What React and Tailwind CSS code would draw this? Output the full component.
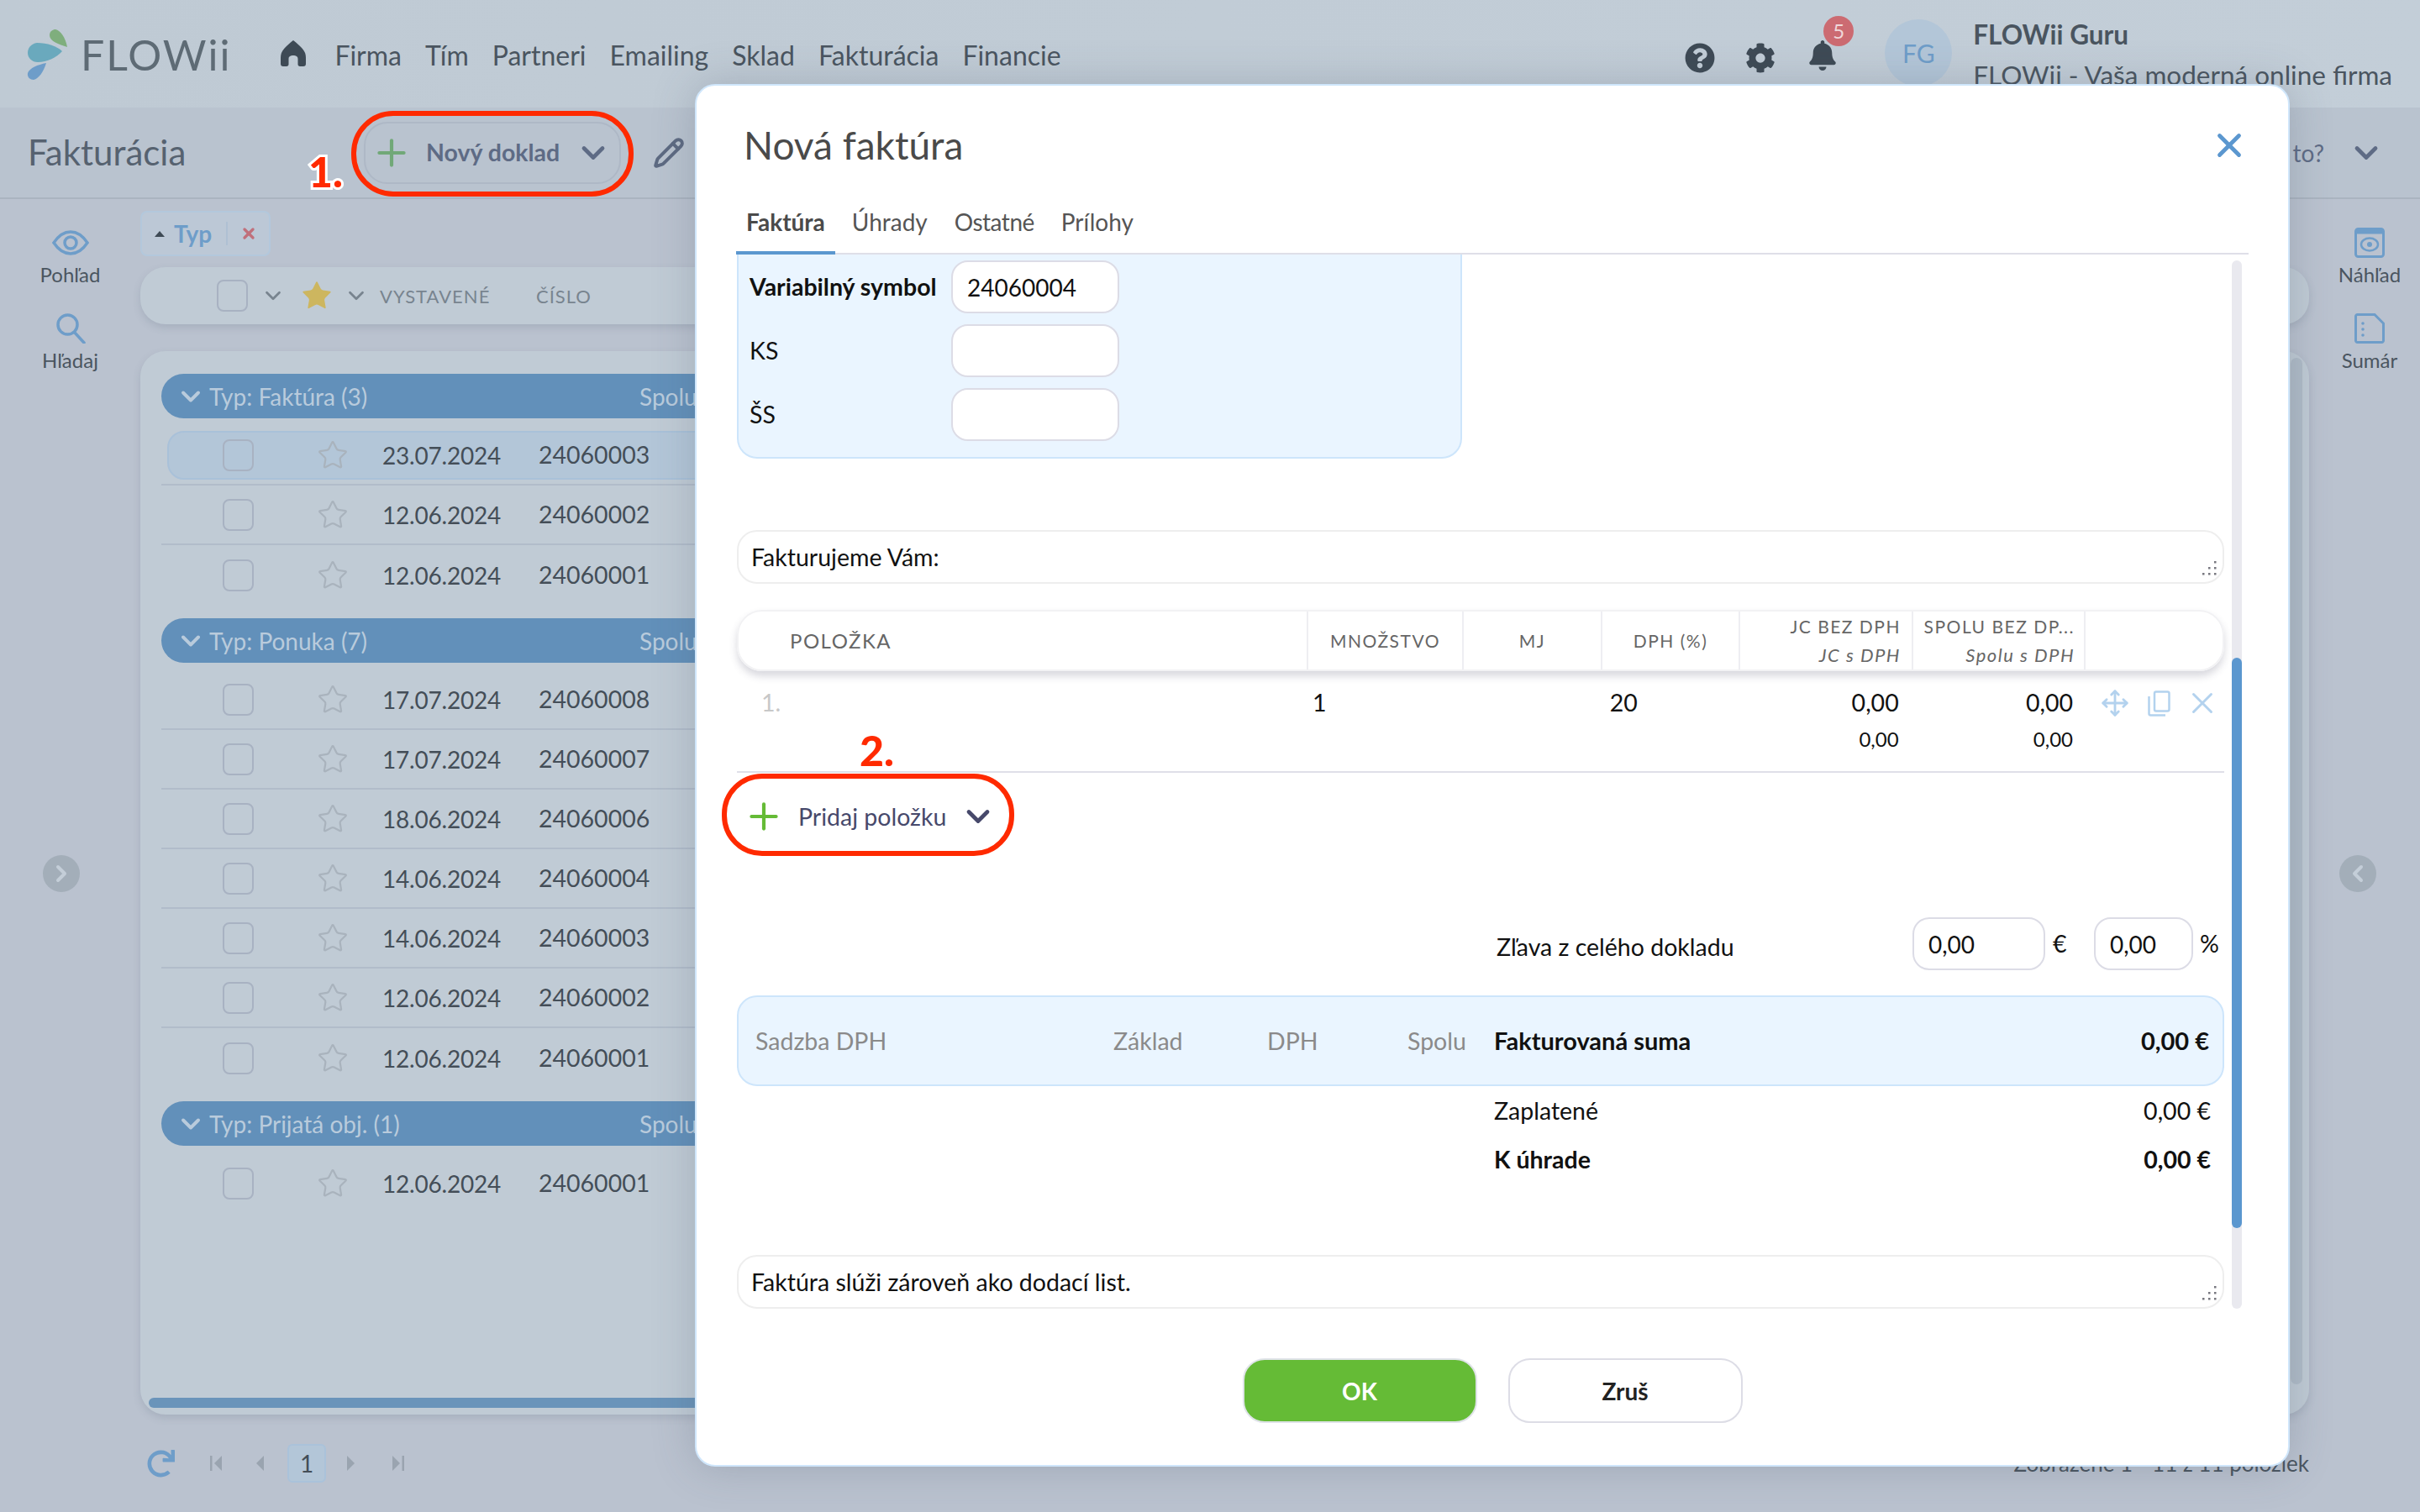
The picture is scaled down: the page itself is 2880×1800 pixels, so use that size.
import { Plus, ChevronDown, ChevronLeft, ChevronRight, Star, Pencil, X, Move } from 'lucide-react';
import { FaQuestionCircle, FaCog, FaBell, FaRedo } from 'react-icons/fa';

const groups = [
  {
    title: 'Typ: Faktúra (3)',
    rows: [
      { date: '23.07.2024', num: '24060003', selected: true },
      { date: '12.06.2024', num: '24060002' },
      { date: '12.06.2024', num: '24060001' },
    ],
  },
  {
    title: 'Typ: Ponuka (7)',
    rows: [
      { date: '17.07.2024', num: '24060008' },
      { date: '17.07.2024', num: '24060007' },
      { date: '18.06.2024', num: '24060006' },
      { date: '14.06.2024', num: '24060004' },
      { date: '14.06.2024', num: '24060003' },
      { date: '12.06.2024', num: '24060002' },
      { date: '12.06.2024', num: '24060001' },
    ],
  },
  {
    title: 'Typ: Prijatá obj. (1)',
    rows: [{ date: '12.06.2024', num: '24060001' }],
  },
];

const nav = ['Firma', 'Tím', 'Partneri', 'Emailing', 'Sklad', 'Fakturácia', 'Financie'];

const Logo = () => (
  <svg width="54" height="68" viewBox="0 0 54 68" className="shrink-0">
    <path d="M50 25C40 22 29 18 29 11C29 6 33 4 36 4C42 5 48 14 50 25Z" fill="#7fae7d" />
    <path d="M44 30C38 24 26 20 14 20C7 21 3 26 3 32C3 38 8 43 15 43C26 43 38 37 44 30Z" fill="#6aa9bd" />
    <path d="M25 44C15 46 5 50 3 56C2 61 6 64 10 64C16 63 22 54 25 44Z" fill="#6e9dc9" />
  </svg>
);

const HomeIcon = () => (
  <svg width="30" height="31" viewBox="0 0 30 31" className="shrink-0">
    <path d="M15 0C19 3 26 9 28 13C30 16 30 19 30 23V28C30 30 29 31 27 31H23C21.500 31 20.500 30 20.500 28.500V22C20.500 19 18 18 15 18C12 18 9.500 19 9.500 22V28.500C9.500 30 8.500 31 7 31H3C1 31 0 30 0 28V23C0 19 0 16 2 13C4 9 11 3 15 0Z" fill="#3e4a55" />
  </svg>
);

const EyeIcon = () => (
  <svg width="44" height="30" viewBox="0 0 44 30" fill="none" stroke="#6e9dc9" strokeWidth="3.500">
    <path d="M2 15C8 6 15 2 22 2C29 2 36 6 42 15C36 24 29 28 22 28C15 28 8 24 2 15Z" />
    <circle cx="22" cy="15" r="7" />
  </svg>
);

const SearchIcon = () => (
  <svg width="36" height="36" viewBox="0 0 36 36" fill="none" stroke="#6e9dc9" strokeWidth="3.500" strokeLinecap="round">
    <circle cx="14.500" cy="13.500" r="11.500" />
    <path d="M22.500 22.500L34 35" />
  </svg>
);

const CopyIcon = () => (
  <svg width="27" height="31" viewBox="0 0 27 31" fill="none" stroke="#b3d2ee" strokeWidth="2.500">
    <rect x="8" y="1.500" width="17.500" height="23" rx="2" />
    <path d="M1.500 7V27.500C1.500 28.600 2.400 29.500 3.500 29.500H21" />
  </svg>
);

const Checkbox = ({ className }) => (
  <div className={`w-[37px] h-[38px] shrink-0 rounded-[8px] border-2 border-[#a8b2c2] ${className || ''}`} />
);

const Grip = () => (
  <svg width="18" height="18" viewBox="0 0 18 18" className="absolute right-[7px] bottom-[7px]" fill="#77777f">
    <rect x="15" y="0" width="2.500" height="2.500" />
    <rect x="15" y="7" width="2.500" height="2.500" />
    <rect x="8" y="7" width="2.500" height="2.500" />
    <rect x="15" y="14" width="2.500" height="2.500" />
    <rect x="8" y="14" width="2.500" height="2.500" />
    <rect x="1" y="14" width="2.500" height="2.500" />
  </svg>
);

const Field = ({ value, className }) => (
  <div className={`h-[63px] flex items-center pl-[17px] bg-white border-2 border-[#dcdce6] rounded-[20px] text-[28px] text-[#111] ${className}`}>
    {value}
  </div>
);

const Row = ({ row, last }) => (
  <div className={`h-[71px] flex items-center ${last ? '' : 'border-b-2 border-[#b1bcca]'}`}>
    <div className={`flex items-center h-[58px] flex-1 ml-[7px] pl-[64px] rounded-l-[20px] border-2 ${row.selected ? 'bg-[#b3c6d8] border-[#a9c1d9]' : 'border-transparent'}`}>
      <Checkbox />
      <Star size={38} strokeWidth={1.400} className="ml-[75px] text-[#a9b3bd] shrink-0" />
      <div className="ml-[40px] w-[186px] text-[28px] text-[#444e58] tracking-[-0.2px]">{row.date}</div>
      <div className="text-[28.500px] text-[#444e58]">{row.num}</div>
    </div>
  </div>
);

const Group = ({ group, first }) => (
  <div className={first ? '' : 'mt-[16px]'}>
    <div className="h-[53px] flex items-center pl-[17px] rounded-l-[27px] bg-[#6290ba] text-[#b9cbdc] text-[28px]">
      <ChevronDown size={36} strokeWidth={2.600} className="shrink-0" />
      <span className="ml-[4px] w-[512px]">{group.title}</span>
      <span>Spolu</span>
    </div>
    <div className="mt-[9px]">
      {group.rows.map((row, i) => (
        <Row key={i} row={row} last={i === group.rows.length - 1} />
      ))}
    </div>
  </div>
);

const SideButton = ({ icon, label, className }) => (
  <div className={`flex flex-col items-center text-[24px] text-[#4a5560] ${className || ''}`}>
    <div className="h-[36px] flex items-center justify-center">{icon}</div>
    <div className="mt-[2px]">{label}</div>
  </div>
);

const Triangle = ({ flip, bar }) => (
  <svg width="14" height="18" viewBox="0 0 14 18" fill="#9aa4b0" className={flip ? 'rotate-180' : ''}>
    {bar && <rect x="0" y="0" width="2.500" height="18" />}
    <path d="M14 0V18L5 9Z" />
  </svg>
);

const HeadCell = ({ className, children }) => (
  <div className={`h-full shrink-0 border-r-2 border-[#eeeef2] text-[#666] tracking-[1.500px] ${className}`}>
    {children}
  </div>
);

const Modal = () => (
  <div className="absolute left-[827px] top-[100px] w-[1898px] h-[1646px] flex flex-col bg-white border-2 border-[#cfe6fb] rounded-[24px] shadow-[0_0_50px_rgba(70,85,105,0.25)] text-[#111]">
    <div className="h-[101px] flex items-center justify-between pt-[41px] pl-[56px] pr-[47px]">
      <h1 className="text-[46px] leading-[60px] text-[#4a4a4a]">Nová faktúra</h1>
      <X size={46} strokeWidth={2.500} className="text-[#5b97cf]" />
    </div>

    <div className="mt-[26px] ml-[47px] mr-[47px] h-[74px] flex gap-[8px] border-b-2 border-[#dfdfe8] text-[28px] text-[#555]">
      <div className="px-[12px] h-[74px] pt-[14px] font-bold border-b-4 border-[#5b97cf] text-[#4a4a4a]">Faktúra</div>
      <div className="px-[12px] pt-[14px]">Úhrady</div>
      <div className="px-[12px] pt-[14px] tracking-[-0.500px]">Ostatné</div>
      <div className="px-[12px] pt-[14px]">Prílohy</div>
    </div>

    <div className="flex ml-[48px] h-[1255px] text-[28.500px]">
      <div className="w-[1770px] shrink-0">
        <div className="w-[863px] h-[243px] pt-[7px] pl-[13px] flex flex-col gap-[13px] bg-[#eaf5ff] border-2 border-t-0 border-[#cde5fb] rounded-b-[24px]">
          <div className="flex items-center">
            <div className="w-[240px] font-bold">Variabilný symbol</div>
            <Field value="24060004" className="w-[200px]" />
          </div>
          <div className="flex items-center">
            <div className="w-[240px]">KS</div>
            <Field value="" className="w-[200px]" />
          </div>
          <div className="flex items-center">
            <div className="w-[240px]">ŠS</div>
            <Field value="" className="w-[200px]" />
          </div>
        </div>

        <div className="relative mt-[85px] h-[64px] flex items-center pl-[15px] border-2 border-[#eeeeee] rounded-[24px]">
          Fakturujeme Vám:
          <Grip />
        </div>

        <div className="mt-[31px] h-[73px] flex items-center border-2 border-[#f2f2f4] rounded-[30px] shadow-[0_6px_10px_rgba(60,60,90,0.2)] overflow-hidden text-[21px]">
          <HeadCell className="w-[678px] flex items-center pl-[61px] text-[24px]">POLOŽKA</HeadCell>
          <HeadCell className="w-[185px] flex items-center justify-center">MNOŽSTVO</HeadCell>
          <HeadCell className="w-[165px] flex items-center justify-center">MJ</HeadCell>
          <HeadCell className="w-[164px] flex items-center justify-center">DPH (%)</HeadCell>
          <HeadCell className="w-[206px] flex flex-col items-end justify-center gap-[10px] pr-[13px] leading-[24px]">
            <div>JC BEZ DPH</div>
            <div className="italic text-[22px]">JC s DPH</div>
          </HeadCell>
          <HeadCell className="w-[205px] flex flex-col items-end justify-center gap-[10px] pr-[11px] leading-[24px]">
            <div>SPOLU BEZ DP...</div>
            <div className="italic text-[22px]">Spolu s DPH</div>
          </HeadCell>
        </div>

        <div className="h-[121px] flex items-start border-b-2 border-[#dfdfe8] pt-[16px]">
          <div className="w-[687px] pl-[29px] text-[#c8c8c8]">1.</div>
          <div className="w-[355px]">1</div>
          <div className="w-[100px]">20</div>
          <div className="w-[245px] flex flex-col items-end">
            <div>0,00</div>
            <div className="text-[24px] mt-[4px]">0,00</div>
          </div>
          <div className="w-[208px] flex flex-col items-end">
            <div>0,00</div>
            <div className="text-[24px] mt-[4px]">0,00</div>
          </div>
          <div className="flex items-center ml-[24px] mt-[1px] text-[#b3d2ee]">
            <div className="w-[52px] flex justify-center"><Move size={34} strokeWidth={2} /></div>
            <div className="w-[52px] flex justify-center"><CopyIcon /></div>
            <div className="w-[52px] flex justify-center"><X size={42} strokeWidth={1.700} /></div>
          </div>
        </div>

        <div className="h-[104px] flex items-center pl-[7px] text-[#47496b]">
          <Plus size={50} strokeWidth={2} className="text-[#65bb36]" />
          <span className="ml-[16px] w-[182px]">Pridaj položku</span>
          <ChevronDown size={44} strokeWidth={2.600} className="ml-[10px]" />
        </div>

        <div className="mt-[68px] h-[63px] flex items-center">
          <div className="ml-[904px] w-[495px] pt-[8px]">Zľava z celého dokladu</div>
          <Field value="0,00" className="w-[158px]" />
          <div className="w-[58px] pl-[9px]">€</div>
          <Field value="0,00" className="w-[118px]" />
          <div className="pl-[8px]">%</div>
        </div>

        <div className="mt-[30px] h-[108px] flex items-center pl-[20px] pr-[16px] bg-[#eaf5ff] border-2 border-[#cde5fb] rounded-[24px]">
          <div className="w-[426px] text-[#8a8a8a]">Sadzba DPH</div>
          <div className="w-[183px] text-[#8a8a8a]">Základ</div>
          <div className="w-[167px] text-[#8a8a8a]">DPH</div>
          <div className="w-[103px] text-[#8a8a8a]">Spolu</div>
          <div className="font-bold text-[29px]">Fakturovaná suma</div>
          <div className="ml-auto font-bold text-[29px]">0,00 €</div>
        </div>

        <div className="h-[58px] flex items-center justify-between pl-[901px] pr-[16px]">
          <div>Zaplatené</div>
          <div>0,00 €</div>
        </div>
        <div className="h-[58px] flex items-center justify-between pl-[901px] pr-[16px] font-bold">
          <div>K úhrade</div>
          <div>0,00 €</div>
        </div>

        <div className="relative mt-[85px] h-[64px] flex items-center pl-[15px] border-2 border-[#eeeeee] rounded-[24px]">
          Faktúra slúži zároveň ako dodací list.
          <Grip />
        </div>
      </div>

      <div className="relative ml-[9px] mt-[7px] w-[12px] h-[1248px] rounded-full bg-[#e9e9ef]">
        <div className="absolute top-[473px] w-[12px] h-[679px] rounded-full bg-[#5b97cf]" />
      </div>
    </div>

    <div className="mt-[59px] flex justify-center gap-[37px] text-[28px] font-bold">
      <div className="w-[279px] h-[77px] flex items-center justify-center rounded-[26px] border-2 border-[#dfe3e8] bg-[#65bb36] text-white">OK</div>
      <div className="w-[279px] h-[77px] flex items-center justify-center rounded-[26px] border-2 border-[#dddde6] text-[#222]">Zruš</div>
    </div>
  </div>
);

const App = () => (
  <div className="relative w-[2880px] h-[1800px] overflow-hidden bg-[#bac2cf] [font-family:Lato,sans-serif]">
    <header className="h-[128px] flex items-start pl-[30px] bg-gradient-to-r from-[#bfcad4] to-[#c3ced8] text-[32px] text-[#4a5560]">
      <div className="flex items-center mt-[30px]">
        <Logo />
        <div className="ml-[12px] text-[50px] tracking-[2px] text-[#5e6b75] leading-[70px]">FLOWii</div>
      </div>
      <div className="ml-[59px] mt-[48px]"><HomeIcon /></div>
      <nav className="ml-[34px] mt-[42px] flex gap-[28px]">
        {nav.map((item) => <div key={item}>{item}</div>)}
      </nav>
      <div className="ml-auto flex items-start">
        <FaQuestionCircle size={36} className="mt-[51px] text-[#3e4a55]" />
        <FaCog size={36} className="ml-[36px] mt-[51px] text-[#3e4a55]" />
        <div className="relative ml-[38px] mt-[48px]">
          <FaBell size={36} className="text-[#3e4a55]" />
          <div className="absolute left-[19px] top-[-29px] w-[36px] h-[36px] rounded-full bg-[#cc6b72] text-[#f0d8da] text-[24px] flex items-center justify-center">5</div>
        </div>
        <div className="ml-[56px] mt-[23px] w-[80px] h-[80px] rounded-full bg-[#b3c6d8] text-[#6e9dc9] text-[30px] flex items-center justify-center">FG</div>
        <div className="ml-[25px] mr-[33px] mt-[21px] text-[31.500px]">
          <div className="font-bold leading-[40px]">FLOWii Guru</div>
          <div className="leading-[40px] mt-[8px]">FLOWii - Vaša moderná online firma</div>
        </div>
      </div>
    </header>

    <div className="h-[109px] flex items-center pl-[33px] pr-[42px] border-b-2 border-[#aab4c0] bg-[#b9c3cf]">
      <div className="w-[400px] text-[42px] text-[#566270]">Fakturácia</div>
      <div className="w-[306px] h-[74px] flex items-center pl-[6px] border-2 border-[#aeb8c6] rounded-[28px] text-[#5e6b85]">
        <Plus size={50} strokeWidth={2} className="text-[#71a878]" />
        <span className="ml-[16px] text-[28.500px] font-bold w-[177px]">Nový doklad</span>
        <ChevronDown size={44} strokeWidth={2.600} />
      </div>
      <Pencil size={38} strokeWidth={2.500} className="ml-[38px] text-[#5d6a82]" />
      <div className="ml-auto text-[28px] text-[#5e6b85]">Ako na to?</div>
      <ChevronDown size={44} strokeWidth={2.600} className="ml-[28px] text-[#5e6b85]" />
    </div>

    <div className="flex">
      <aside className="w-[167px] shrink-0 pt-[34px] relative">
        <SideButton icon={<EyeIcon />} label="Pohľad" />
        <SideButton icon={<SearchIcon />} label="Hľadaj" className="mt-[28px]" />
        <div className="absolute left-[51px] top-[781px] w-[44px] h-[44px] rounded-full bg-[#a3aeb9] text-[#c4ced8] flex items-center justify-center">
          <ChevronRight size={32} strokeWidth={3} />
        </div>
      </aside>

      <main className="w-[2581px] shrink-0">
        <div className="mt-[14px] w-[155px] h-[54px] flex items-center pl-[15px] rounded-[8px] border-2 border-[#b3c8dc] bg-[#bcc8d6]">
          <div className="w-0 h-0 border-x-[6px] border-x-transparent border-b-[7px] border-b-[#3e4a55]" />
          <span className="ml-[11px] text-[28px] font-bold text-[#6e9dc9] w-[62px]">Typ</span>
          <div className="w-[2px] h-[28px] bg-[#afc0d3]" />
          <X size={20} strokeWidth={4} className="ml-[15px] text-[#c0707b]" />
        </div>

        <div className="mt-[13px] h-[68px] flex items-center pl-[91px] rounded-[30px] bg-[#c0cbd5] shadow-[0_4px_10px_rgba(90,105,125,0.2)] text-[22px] tracking-[1px] text-[#78848f]">
          <Checkbox />
          <ChevronDown size={30} strokeWidth={2.200} className="ml-[15px]" />
          <Star size={40} fill="#cdb65f" strokeWidth={0} className="ml-[17px] text-[#cdb65f]" />
          <ChevronDown size={30} strokeWidth={2.200} className="ml-[12px]" />
          <div className="ml-[13px] w-[186px]">VYSTAVENÉ</div>
          <div>ČÍSLO</div>
        </div>

        <div className="relative mt-[32px] h-[1266px] pt-[27px] pl-[25px] pr-[60px] rounded-[30px] bg-[#c0cbd5] shadow-[0_4px_10px_rgba(90,105,125,0.2)]">
          {groups.map((group, i) => <Group key={group.title} group={group} first={i === 0} />)}
          <div className="absolute left-[10px] right-[60px] top-[1246px] h-[12px] rounded-full bg-[#6a94ba]" />
          <div className="absolute right-[8px] top-[8px] bottom-[36px] w-[14px] rounded-full bg-[#b0bcc8]" />
        </div>

        <div className="mt-[35px] flex items-center pl-[8px] text-[28px] text-[#444e58]">
          <FaRedo size={33} className="text-[#6e9dc9]" />
          <div className="ml-[42px]"><Triangle bar /></div>
          <div className="ml-[36px]"><Triangle /></div>
          <div className="ml-[28px] w-[46px] h-[46px] flex items-center justify-center rounded-[6px] bg-[#b3c6d8] border-2 border-[#aac2da]">1</div>
          <div className="ml-[25px]"><Triangle flip /></div>
          <div className="ml-[40px]"><Triangle flip bar /></div>
          <div className="ml-auto text-[26px] text-[#4a5560]">Zobrazené 1 - 11 z 11 položiek</div>
        </div>
      </main>

      <aside className="flex-1 pt-[34px] pl-[12px] relative">
        <SideButton
          icon={
            <svg width="36" height="36" viewBox="0 0 36 36" fill="none">
              <rect x="1.500" y="1.500" width="33" height="33" rx="3" stroke="#6e9dc9" strokeWidth="3" />
              <rect x="1.500" y="1.500" width="33" height="6" fill="#6e9dc9" />
              <ellipse cx="18" cy="20" rx="10" ry="7.500" stroke="#6e9dc9" strokeWidth="2.500" />
              <circle cx="18" cy="20" r="3" fill="#6e9dc9" />
            </svg>
          }
          label="Náhľad"
        />
        <SideButton
          icon={
            <svg width="36" height="36" viewBox="0 0 36 36" fill="none">
              <path d="M3.500 1.500H24L34.500 12V32.500C34.500 33.500 33.500 34.500 32.500 34.500H3.500C2.500 34.500 1.500 33.500 1.500 32.500V3.500C1.500 2.500 2.500 1.500 3.500 1.500Z" stroke="#6e9dc9" strokeWidth="3" />
              <circle cx="10" cy="12" r="1.800" fill="#6e9dc9" />
              <circle cx="10" cy="19" r="1.800" fill="#6e9dc9" />
              <circle cx="10" cy="26" r="1.800" fill="#6e9dc9" />
            </svg>
          }
          label="Sumár"
          className="mt-[28px]"
        />
        <div className="absolute left-[36px] top-[781px] w-[44px] h-[44px] rounded-full bg-[#a3aeb9] text-[#c4ced8] flex items-center justify-center">
          <ChevronLeft size={32} strokeWidth={3} />
        </div>
      </aside>
    </div>

    <Modal />

    <div className="absolute left-[418px] top-[132px] w-[336px] h-[102px] rounded-[50px] border-[6px] border-[#ff2a00]" />
    <div className="absolute left-[367px] top-[174px] text-[50px] font-black leading-[60px] text-[#ff2a00] [-webkit-text-stroke:6px_white] [paint-order:stroke_fill]">1.</div>
    <div className="absolute left-[859px] top-[921px] w-[348px] h-[98px] rounded-[48px] border-[6px] border-[#ff2a00]" />
    <div className="absolute left-[1023px] top-[863px] text-[50px] font-black leading-[60px] text-[#ff2a00] [-webkit-text-stroke:6px_white] [paint-order:stroke_fill]">2.</div>
  </div>
);

export default App;
